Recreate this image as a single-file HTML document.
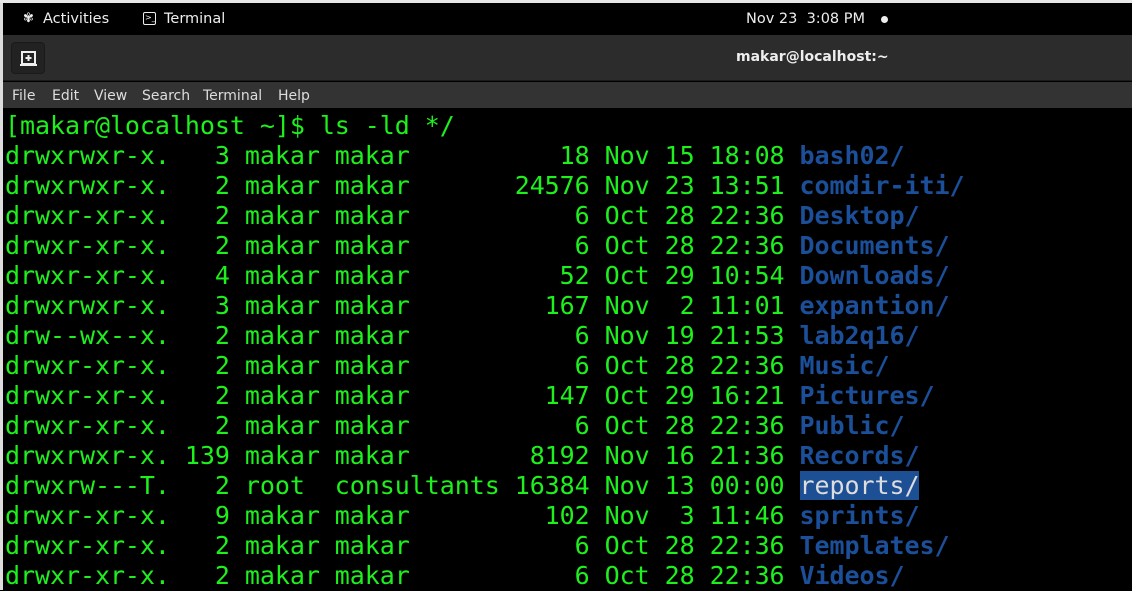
<!DOCTYPE html>
<html><head><meta charset="utf-8"><style>
*{margin:0;padding:0;box-sizing:border-box}
body{width:1132px;height:590px;overflow:hidden;background:#000;font-family:"DejaVu Sans","Liberation Sans",sans-serif;position:relative}
.top{position:absolute;left:0;top:0;width:1132px;height:3px;background:#e8e8e8}
.bar{position:absolute;left:3px;top:3px;width:1129px;height:32px;background:#000;color:#eee;font-size:14.5px}
.bar span{position:absolute;top:8px}
.title{position:absolute;left:3px;top:35px;width:1129px;height:46px;background:#2c2c2c;border-bottom:1px solid #1a1a1a}
.btn{position:absolute;left:8px;top:7px;width:34px;height:32px;background:#222;border:1px solid #1a1a1a;border-radius:4px}
.menu{position:absolute;left:3px;top:82px;width:1129px;height:26px;background:#333;color:#ddd;font-size:14px}
.menu span{position:absolute;top:6px}
.lb{position:absolute;left:0;top:3px;width:3px;height:587px;background:#ddd}
pre{position:absolute;left:5px;top:111px;font-family:"DejaVu Sans Mono","Liberation Mono",monospace;font-size:25px;line-height:30px;color:#1ef01e;letter-spacing:-0.06px}
b{color:#1c4f99;font-weight:bold}
.sel{background:#1c4f94;color:#ddd;font-weight:normal}
</style></head><body>
<div class="top"></div><div class="lb"></div>
<div class="bar">
<span style="left:20px;top:8px;font-size:13px">✾</span>
<span style="left:40px">Activities</span>
<span style="left:140px;top:9px;width:13px;height:13px;border:1.5px solid #eee;border-radius:2px;font-size:8px;line-height:9px;padding-left:1px">&gt;_</span>
<span style="left:161px">Terminal</span>
<span style="left:743px">Nov 23&nbsp; 3:08 PM</span>
<span style="left:878px;top:13px;width:7px;height:7px;border-radius:50%;background:#eee"></span>
</div>
<div class="title">
<div class="btn"><svg width="34" height="32" viewBox="0 0 34 32"><rect x="10" y="9" width="13" height="12" fill="none" stroke="#eee" stroke-width="2"/><line x1="8" y1="22" x2="25" y2="22" stroke="#eee" stroke-width="2"/><path d="M16.5 12v6M13.5 15h6" stroke="#eee" stroke-width="2"/></svg></div>
<span style="position:absolute;left:733px;top:14px;color:#eee;font-size:14px;font-weight:bold">makar@localhost:~</span>
</div>
<div class="menu">
<span style="left:9px">File</span><span style="left:49px">Edit</span><span style="left:91px">View</span><span style="left:139px">Search</span><span style="left:200px">Terminal</span><span style="left:275px">Help</span>
</div>
<pre>[makar@localhost ~]$ ls -ld */
drwxrwxr-x.   3 makar makar          18 Nov 15 18:08 <b>bash02/</b>
drwxrwxr-x.   2 makar makar       24576 Nov 23 13:51 <b>comdir-iti/</b>
drwxr-xr-x.   2 makar makar           6 Oct 28 22:36 <b>Desktop/</b>
drwxr-xr-x.   2 makar makar           6 Oct 28 22:36 <b>Documents/</b>
drwxr-xr-x.   4 makar makar          52 Oct 29 10:54 <b>Downloads/</b>
drwxrwxr-x.   3 makar makar         167 Nov  2 11:01 <b>expantion/</b>
drw--wx--x.   2 makar makar           6 Nov 19 21:53 <b>lab2q16/</b>
drwxr-xr-x.   2 makar makar           6 Oct 28 22:36 <b>Music/</b>
drwxr-xr-x.   2 makar makar         147 Oct 29 16:21 <b>Pictures/</b>
drwxr-xr-x.   2 makar makar           6 Oct 28 22:36 <b>Public/</b>
drwxrwxr-x. 139 makar makar        8192 Nov 16 21:36 <b>Records/</b>
drwxrw---T.   2 root  consultants 16384 Nov 13 00:00 <span class="sel">reports/</span>
drwxr-xr-x.   9 makar makar         102 Nov  3 11:46 <b>sprints/</b>
drwxr-xr-x.   2 makar makar           6 Oct 28 22:36 <b>Templates/</b>
drwxr-xr-x.   2 makar makar           6 Oct 28 22:36 <b>Videos/</b></pre>
</body></html>
